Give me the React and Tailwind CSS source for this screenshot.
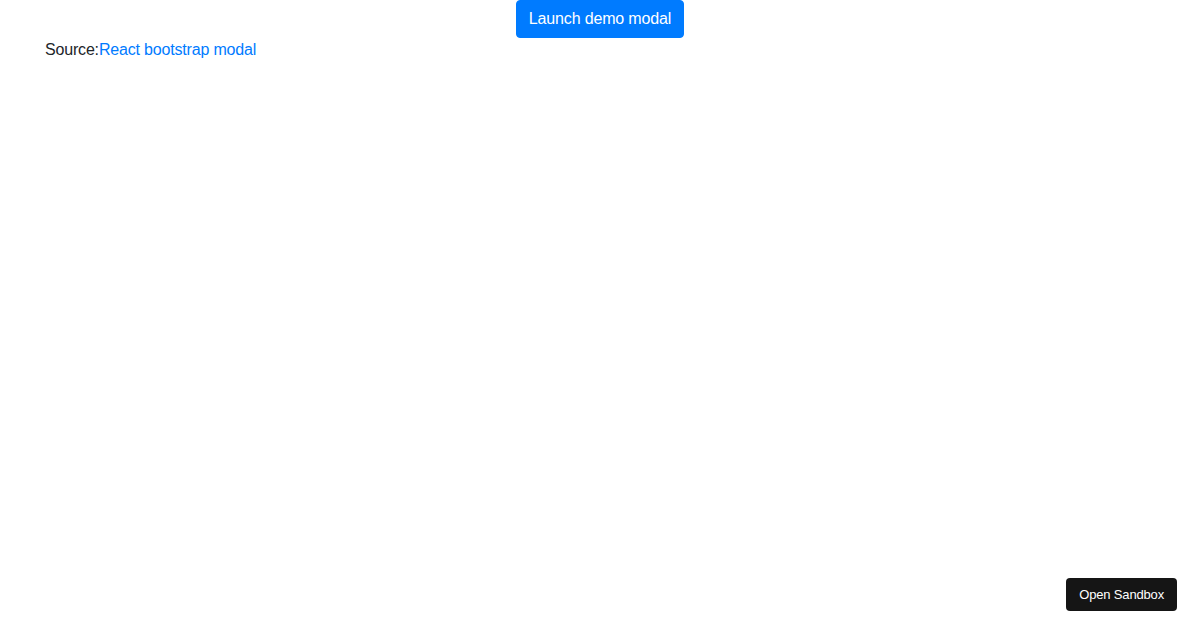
export default function App() {
  return (
    <div className="min-h-[630px] bg-white text-[#212529] text-[16px] leading-6 tracking-[-0.18px]" style={{ fontFamily: '"Liberation Sans", Arial, sans-serif' }}>
      <div className="flex justify-center">
        <button className="bg-[#007bff] text-white text-[16px] leading-6 px-3 py-1.5 border border-[#007bff] rounded-[4px] tracking-[-0.16px]">
          Launch demo modal
        </button>
      </div>
      <div className="pl-[45px]">
        Source:<a href="#" className="text-[#007bff]">React bootstrap modal</a>
      </div>
      <div className="fixed right-[23px] bottom-[19px] bg-[#151515] text-white text-[13px] leading-[17px] px-[13px] py-2 rounded-[4px] tracking-[-0.17px]">
        Open Sandbox
      </div>
    </div>
  );
}
